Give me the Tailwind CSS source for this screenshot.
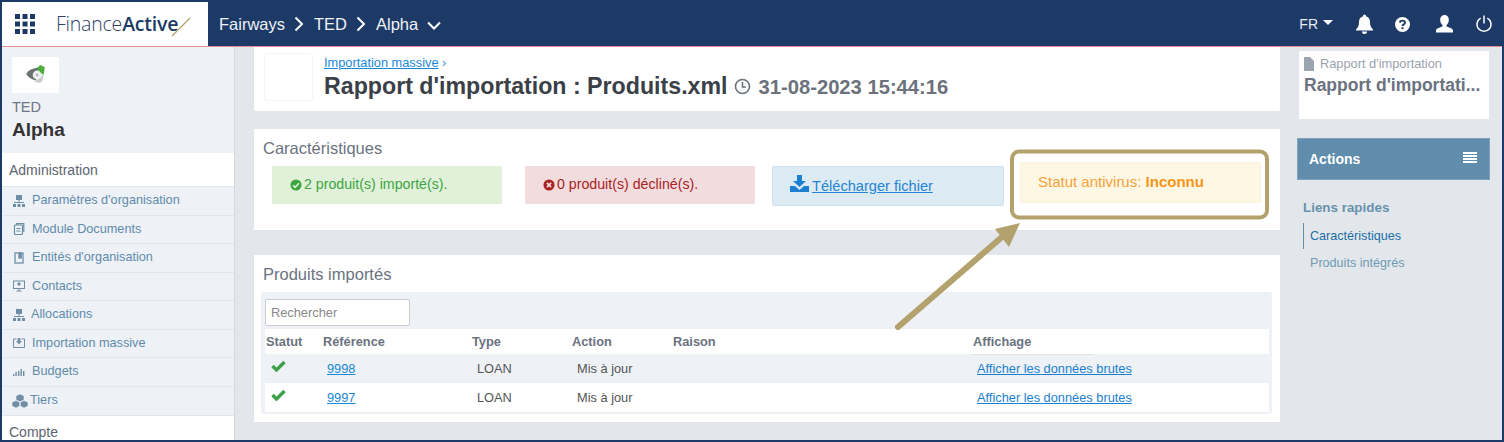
<!DOCTYPE html>
<html lang="fr">
  <head>
    <meta charset="UTF-8" />
    <title>Rapport d'importation</title>
    <script src="https://cdn.jsdelivr.net/npm/@tailwindcss/browser@4"></script>
  </head>
  <body class="bg-[#e3e7eb] font-['Liberation_Sans',Arial,sans-serif] overflow-hidden">
    <div class="relative w-[1504px] h-[442px] overflow-hidden border-x-2 border-t-2 border-b-2 border-[#1d3a67] flex flex-col">
      <!-- Top bar -->
      <header class="h-[45px] shrink-0 flex items-stretch bg-[#1d3a67] border-b border-[#e58a92] text-white">
        <div class="w-[206px] bg-white flex items-center pl-[13px] shrink-0">
          <svg width="20" height="20" viewBox="0 0 20 20" fill="#1d3a67">
            <rect x="0" y="0" width="5" height="5" /><rect x="7.5" y="0" width="5" height="5" /><rect x="15" y="0" width="5" height="5" />
            <rect x="0" y="7.5" width="5" height="5" /><rect x="7.5" y="7.5" width="5" height="5" /><rect x="15" y="7.5" width="5" height="5" />
            <rect x="0" y="15" width="5" height="5" /><rect x="7.5" y="15" width="5" height="5" /><rect x="15" y="15" width="5" height="5" />
          </svg>
          <span class="ml-[21px] text-[19.5px] tracking-[-0.2px] text-[#2c4265] font-['Open_Sans',sans-serif] font-light leading-none whitespace-nowrap">Finance<span class="font-semibold text-[#1d3a67]">Active</span></span>
          <svg class="-ml-[7px] mt-[6px]" width="20" height="20" viewBox="0 0 20 20"><path d="M1 19 L19 1" stroke="#b3a26e" stroke-width="1.3" /></svg>
        </div>
        <nav class="flex items-center pl-[11px] text-[16.5px] text-[#eef1f6]">
          <span>Fairways</span>
          <svg class="ml-[9px]" width="10" height="16" viewBox="0 0 10 16" fill="none" stroke="#fff" stroke-width="2"><path d="M1.5 1.5 L8 8 L1.5 14.5" /></svg>
          <span class="ml-[10px]">TED</span>
          <svg class="ml-[9px]" width="10" height="16" viewBox="0 0 10 16" fill="none" stroke="#fff" stroke-width="2"><path d="M1.5 1.5 L8 8 L1.5 14.5" /></svg>
          <span class="ml-[10px]">Alpha</span>
          <svg class="ml-[9px] mt-[3px]" width="14" height="9" viewBox="0 0 14 9" fill="none" stroke="#fff" stroke-width="2"><path d="M1 1.5 L7 7.5 L13 1.5" /></svg>
        </nav>
        <div class="ml-auto flex items-center pr-[10px]">
          <span class="text-[14px] text-[#e8ebf0]">FR</span>
          <svg class="ml-[5px] mb-[3px]" width="10" height="5" viewBox="0 0 10 5" fill="#fff"><path d="M0 0 H10 L5 5 Z" /></svg>
          <svg class="ml-[23px]" width="17" height="20" viewBox="0 0 17 20" fill="#fff"><path d="M8.5 0.5 a1.5 1.5 0 0 1 1.5 1.7 C13 3 14 5.5 14 8 c0 4 1 5.5 3 7.5 v1 H0 v-1 C2 13.5 3 12 3 8 C3 5.5 4 3 7 2.2 A1.5 1.5 0 0 1 8.5 0.5 Z M6 17.5 h5 a2.5 2.5 0 0 1 -5 0 Z" /></svg>
          <svg class="ml-[22px]" width="15" height="15" viewBox="0 0 15 15"><circle cx="7.5" cy="7.5" r="7.5" fill="#fff" /><path d="M5 5.7 C5 2.9 10 2.9 10 5.7 C10 7.5 7.5 7.3 7.5 9" fill="none" stroke="#1d3a67" stroke-width="1.9" /><rect x="6.5" y="10.2" width="2" height="2" fill="#1d3a67" /></svg>
          <svg class="ml-[26px]" width="17" height="18" viewBox="0 0 17 18" fill="#fff"><path d="M8.5 0 C11.5 0 12.8 2.4 12.8 5 C12.8 7.4 11.6 9.3 10.5 10.2 V11.5 C13 12.5 17 13.4 17 15.5 V17.5 H0 V15.5 C0 13.4 4 12.5 6.5 11.5 V10.2 C5.4 9.3 4.2 7.4 4.2 5 C4.2 2.4 5.5 0 8.5 0 Z" /></svg>
          <svg class="ml-[23px]" width="16" height="18" viewBox="0 0 16 18" fill="none" stroke="#fff" stroke-width="1.5"><path d="M8 0.5 V8.5" /><path d="M4.7 3.2 A7 7 0 1 0 11.3 3.2" /></svg>
        </div>
      </header>

      <div class="flex flex-1 min-h-0">
        <!-- Sidebar -->
        <aside class="w-[233px] shrink-0 bg-[#eef1f6] border-r border-[#d5d9de] overflow-hidden">
          <div class="h-[106px] pl-[10px] pt-[10px]">
            <div class="w-[47px] h-[36px] bg-white flex items-center justify-center">
              <svg width="22" height="22" viewBox="0 0 20 20">
                <path d="M14 1 L18 3 L17 10 L9 5 Z" fill="#4cae3a" />
                <path d="M1 9 C4 5 9 3 12 4 L10 15 C6 14 3 12 1 9 Z" fill="#6a7272" />
                <path d="M10 15 L17 9 L16 15 C14 18 11 17 8 16 Z" fill="#c9cccc" />
                <circle cx="11" cy="10" r="4" fill="#eef1f0" />
                <path d="M11 8.5 V11.5 M9.5 10 H12.5" stroke="#8a9090" stroke-width="0.6" />
              </svg>
            </div>
            <div class="mt-[6px] text-[14.5px] leading-[17px] text-[#6e7785]">TED</div>
            <div class="mt-[2px] text-[19px] leading-[24px] font-bold text-[#333]">Alpha</div>
          </div>
          <div class="h-[34px] bg-white pl-[7px] pt-[2px] flex items-center text-[14px] text-[#5c6470] border-b border-[#dfe6ef]">Administration</div>
          <ul class="text-[12.7px] text-[#5e8cab]">
            <li class="h-[28.5px] flex items-center pl-[11px] gap-[7px] border-b border-[#dfe6ef]">
              <svg class="w-[12px] h-[12px] shrink-0" viewBox="0 0 12 12" fill="#6f8ea6"><rect x="3" y="0" width="6" height="5" /><rect x="1" y="7" width="10" height="1" /><rect x="5.5" y="5" width="1" height="3" /><rect x="0" y="9" width="3" height="3" /><rect x="4.5" y="9" width="3" height="3" /><rect x="9" y="9" width="3" height="3" /></svg>
              Paramètres d'organisation</li>
            <li class="h-[28.5px] flex items-center pl-[11px] gap-[7px] border-b border-[#dfe6ef]">
              <svg class="w-[12px] h-[12px] shrink-0" viewBox="0 0 12 12" fill="none" stroke="#6f8ea6" stroke-width="1.2"><rect x="1.5" y="2" width="8" height="9.500" rx="1" /><path d="M3.5 2 V0.7 H10.8 V9" /><path d="M3.5 5.5 H7.5 M3.5 8 H7.5" /></svg>
              Module Documents</li>
            <li class="h-[28.5px] flex items-center pl-[12px] gap-[7px] border-b border-[#dfe6ef]">
              <svg class="w-[11px] h-[12px] shrink-0" viewBox="0 0 11 12" fill="none" stroke="#6f8ea6" stroke-width="1.3"><rect x="1" y="1" width="8" height="10" /><rect x="5" y="1" width="2.2" height="5" fill="#6f8ea6" /></svg>
              Entités d'organisation</li>
            <li class="h-[28.5px] flex items-center pl-[11px] gap-[7px] border-b border-[#dfe6ef]">
              <svg class="w-[12px] h-[12px] shrink-0" viewBox="0 0 12 12" fill="none" stroke="#6f8ea6" stroke-width="1"><rect x="0.5" y="1" width="11" height="7.500" /><path d="M6 8.5 V11 M3.5 11 H8.5" /><circle cx="6" cy="4" r="1.2" fill="#6f8ea6" /></svg>
              Contacts</li>
            <li class="h-[28.5px] flex items-center pl-[11px] gap-[6px] border-b border-[#dfe6ef]">
              <svg class="w-[12px] h-[12px] shrink-0" viewBox="0 0 12 12" fill="#6f8ea6"><rect x="3" y="0" width="6" height="5" /><rect x="1" y="7" width="10" height="1" /><rect x="5.5" y="5" width="1" height="3" /><rect x="0" y="9" width="3" height="3" /><rect x="4.5" y="9" width="3" height="3" /><rect x="9" y="9" width="3" height="3" /></svg>
              Allocations</li>
            <li class="h-[28.5px] flex items-center pl-[11px] gap-[7px] border-b border-[#dfe6ef]">
              <svg class="w-[12px] h-[12px] shrink-0" viewBox="0 0 12 12" fill="none" stroke="#6f8ea6" stroke-width="1"><path d="M3.5 2 H0.5 V10.5 H11.5 V2 H8.5" /><path d="M4.7 1 H7.3 V4 H9 L6 7.5 L3 4 H4.7 Z" fill="#6f8ea6" stroke="none" /></svg>
              Importation massive</li>
            <li class="h-[28.5px] flex items-center pl-[11px] gap-[7px] border-b border-[#dfe6ef]">
              <svg class="w-[12px] h-[12px] shrink-0" viewBox="0 0 12 12" fill="#6f8ea6"><rect x="0" y="8" width="1.4" height="2" /><rect x="2.4" y="6" width="1.4" height="4" /><rect x="5" y="5" width="1.4" height="5" /><rect x="7.5" y="3" width="1.4" height="7" /><rect x="10" y="5" width="1.4" height="5" /></svg>
              Budgets</li>
            <li class="h-[28px] flex items-center pl-[10px] pt-[1px] gap-[2px]">
              <svg class="w-[16px] h-[14px] shrink-0" viewBox="0 0 16 14" fill="#6f8ea6" stroke="#eef1f6" stroke-width="0.6"><path d="M8 0 L12 1.8 V6 L8 7.8 L4 6 V1.8 Z" /><path d="M4 6.5 L7.7 8.2 V12 L4 14 L0 12 V8.2 Z" /><path d="M12 6.5 L16 8.2 V12 L12 14 L8.3 12 V8.2 Z" /></svg>
              Tiers</li>
          </ul>
          <div class="h-[34px] bg-white pl-[7px] flex items-center text-[14px] text-[#5c6470] border-t border-[#dfe6ef]">Compte</div>
        </aside>

        <!-- Main column -->
        <main class="w-[1046px] shrink-0 pl-[19px] flex flex-col">
          <div class="h-[64px] w-[1026px] bg-white flex rounded-b-[2px]">
            <div class="ml-[10px] mt-[6px] w-[49px] h-[48px] border border-[#f3f4f6] rounded-[3px]"></div>
            <div class="ml-[11px] mt-[8px]">
              <a class="block text-[12.8px] leading-[15px] text-[#1a88d8]"><span class="underline">Importation massive</span> <span class="text-[#3a93d6]">›</span></a>
              <div class="mt-[0px] flex items-center whitespace-nowrap">
                <h1 class="text-[23.2px] leading-[27px] font-bold text-[#3b4048]">Rapport d'importation : Produits.xml</h1>
                <svg class="ml-[6px] mt-[1px]" width="17" height="17" viewBox="0 0 17 17" fill="none" stroke="#6b727c" stroke-width="1.6"><circle cx="8.500" cy="8.500" r="7" /><path d="M8.5 4 V9 H12" /></svg>
                <span class="ml-[8px] mt-[2px] text-[20.2px] font-bold text-[#6b727c]">31-08-2023 15:44:16</span>
              </div>
            </div>
          </div>

          <section class="mt-[18px] h-[102px] w-[1026px] bg-white border-b border-[#dfe6ef] px-[9px] pt-[9px]">
            <h2 class="text-[16.5px] leading-[20px] text-[#6b7280]">Caractéristiques</h2>
            <div class="flex items-start mt-[8px] text-[14.2px]">
              <div class="ml-[9px] w-[230px] h-[38px] rounded-[2px] bg-[#e0f0d9] text-[#3da63f] flex items-center pl-[18px] gap-[2px]">
                <svg width="12" height="12" viewBox="0 0 13 13"><circle cx="6.500" cy="6.500" r="6" fill="#3da63f" /><path d="M3.3 6.8 L5.5 9 L9.7 4.6" fill="none" stroke="#e0f0d9" stroke-width="1.8" /></svg>
                2 produit(s) importé(s).
              </div>
              <div class="ml-[23px] w-[230px] h-[38px] rounded-[2px] bg-[#f2dcde] text-[#a92323] flex items-center pl-[18px] gap-[2px]">
                <svg width="12" height="12" viewBox="0 0 13 13"><circle cx="6.500" cy="6.500" r="6" fill="#a92323" /><path d="M4.2 4.2 L8.8 8.8 M8.8 4.2 L4.2 8.8" fill="none" stroke="#f2dcde" stroke-width="1.9" /></svg>
                0 produit(s) décliné(s).
              </div>
              <a class="ml-[17px] w-[232px] h-[40px] rounded-[2px] bg-[#dcebf3] border border-[#cde2ec] text-[#2584d3] text-[14.6px] flex items-center pl-[17px] underline">
                <svg class="mb-[6px]" width="19" height="17" viewBox="0 0 19 17" fill="#1b7fd3"><path d="M7 0 H12 V6 H16 L9.5 12 L3 6 H7 Z" /><path d="M0 11 H5 L9.5 15 L14 11 H19 V17 H0 Z" /></svg>
                <span class="ml-[3px] mt-[1px]">Télécharger fichier</span>
              </a>
              <div class="ml-[16px] -mt-[4px] w-[241px] h-[41px] rounded-[2px] bg-[#fef7e3] border border-[#fbf1d9] text-[#f5a13b] text-[15px] flex items-center pl-[17px]">Statut antivirus:&nbsp;<b class="text-[#f79518]">Inconnu</b></div>
            </div>
          </section>

          <section class="mt-[24px] h-[167px] w-[1026px] bg-white px-[7px] pt-[9px]">
            <h2 class="pl-[2px] text-[16.5px] leading-[20px] text-[#6b7280]">Produits importés</h2>
            <div class="mt-[8px] w-[1011px] bg-[#eef1f6] rounded-[3px] p-[2px] pt-[6px]">
              <input placeholder="Rechercher" class="ml-[2px] mt-[1px] block w-[145px] h-[27px] bg-white border border-[#ccc] rounded-[2px] px-[5px] text-[12.8px] placeholder:text-[#888]" />
              <table class="mt-[3px] w-[1004px] ml-[2px] table-fixed text-[12.8px] text-left">
                <thead class="bg-white text-[#6b7280]">
                  <tr class="h-[25px]">
                    <th class="w-[57px] pl-[1px] font-bold">Statut</th>
                    <th class="w-[150px] pl-[1px] font-bold">Référence</th>
                    <th class="w-[100px] font-bold">Type</th>
                    <th class="w-[101px] font-bold">Action</th>
                    <th class="w-[300px] font-bold">Raison</th>
                    <th class="font-bold"><span class="inline-block w-[120px] border-b border-[#e2e2e2] leading-[24px] -mb-[1px]">Affichage</span></th>
                  </tr>
                </thead>
                <tbody class="text-[#555]">
                  <tr class="h-[29px] bg-[#eef1f6]">
                    <td class="pl-[6px]"><svg class="mb-[5px]" width="15" height="12" viewBox="0 0 15 12" fill="none" stroke="#3fa04a" stroke-width="3.4"><path d="M1.5 6 L5.5 10 L13.5 2" /></svg></td>
                    <td class="pl-[5px]"><a class="text-[#1a88d8] underline">9998</a></td>
                    <td class="pl-[5px]">LOAN</td>
                    <td class="pl-[5px]">Mis à jour</td>
                    <td></td>
                    <td class="pl-[4px]"><a class="text-[#1a80cf] underline">Afficher les données brutes</a></td>
                  </tr>
                  <tr class="h-[29px] bg-white">
                    <td class="pl-[6px]"><svg class="mb-[5px]" width="15" height="12" viewBox="0 0 15 12" fill="none" stroke="#3fa04a" stroke-width="3.4"><path d="M1.5 6 L5.5 10 L13.5 2" /></svg></td>
                    <td class="pl-[5px]"><a class="text-[#1a88d8] underline">9997</a></td>
                    <td class="pl-[5px]">LOAN</td>
                    <td class="pl-[5px]">Mis à jour</td>
                    <td></td>
                    <td class="pl-[4px]"><a class="text-[#1a80cf] underline">Afficher les données brutes</a></td>
                  </tr>
                </tbody>
              </table>
            </div>
          </section>
        </main>

        <!-- Right column -->
        <aside class="ml-[16px] w-[194px] pt-[4px]">
          <div class="ml-[2px] w-[190px] h-[68px] bg-white pl-[5px] pt-[5px]">
            <div class="flex items-center gap-[6px] text-[12.8px] leading-[16px] text-[#9aa2ad]">
              <svg width="10" height="14" viewBox="0 0 10 14" fill="#9aa5b1"><path d="M0 0 H6 L10 4 V14 H0 Z" /></svg>
              Rapport d'importation</div>
            <div class="mt-[2px] text-[17.5px] leading-[22px] font-bold text-[#6b7280] whitespace-nowrap">Rapport d'importati...</div>
          </div>
          <div class="mt-[19px] w-[193px] h-[42px] bg-[#5f8dab] border border-[#7fa3bb] flex items-center justify-between pl-[11px] pr-[12px] text-white">
            <b class="text-[14px]">Actions</b>
            <svg class="mb-[4px]" width="14" height="11" viewBox="0 0 14 11" fill="#fff"><rect y="0" width="14" height="2" /><rect y="3" width="14" height="2" /><rect y="6" width="14" height="2" /><rect y="9" width="14" height="2" /></svg>
          </div>
          <div class="mt-[20px] pl-[6px] text-[13.4px] leading-[16px] font-bold text-[#6792ad]">Liens rapides</div>
          <div class="mt-[7px] ml-[6px] h-[26px] border-l-[1.5px] border-[#5f8dab] pl-[6px] flex items-center text-[12.6px] text-[#1b6ea8]">Caractéristiques</div>
          <div class="mt-[1px] ml-[6px] h-[26px] pl-[7px] flex items-center text-[12.6px] text-[#6f9ab5]">Produits intégrés</div>
        </aside>
      </div>

      <!-- Annotation over the page -->
      <svg class="absolute left-[-2px] top-[-2px] pointer-events-none" width="1504" height="442" viewBox="0 0 1504 442" fill="none">
        <rect x="1012" y="151.500" width="255" height="66" rx="7" stroke="#b3a26e" stroke-width="4" />
        <path d="M898 327 L1002 237" stroke="#b3a26e" stroke-width="6" stroke-linecap="round" />
        <path d="M1020 223 L995 229 L1009 247 Z" fill="#b3a26e" />
      </svg>
    </div>
  </body>
</html>
